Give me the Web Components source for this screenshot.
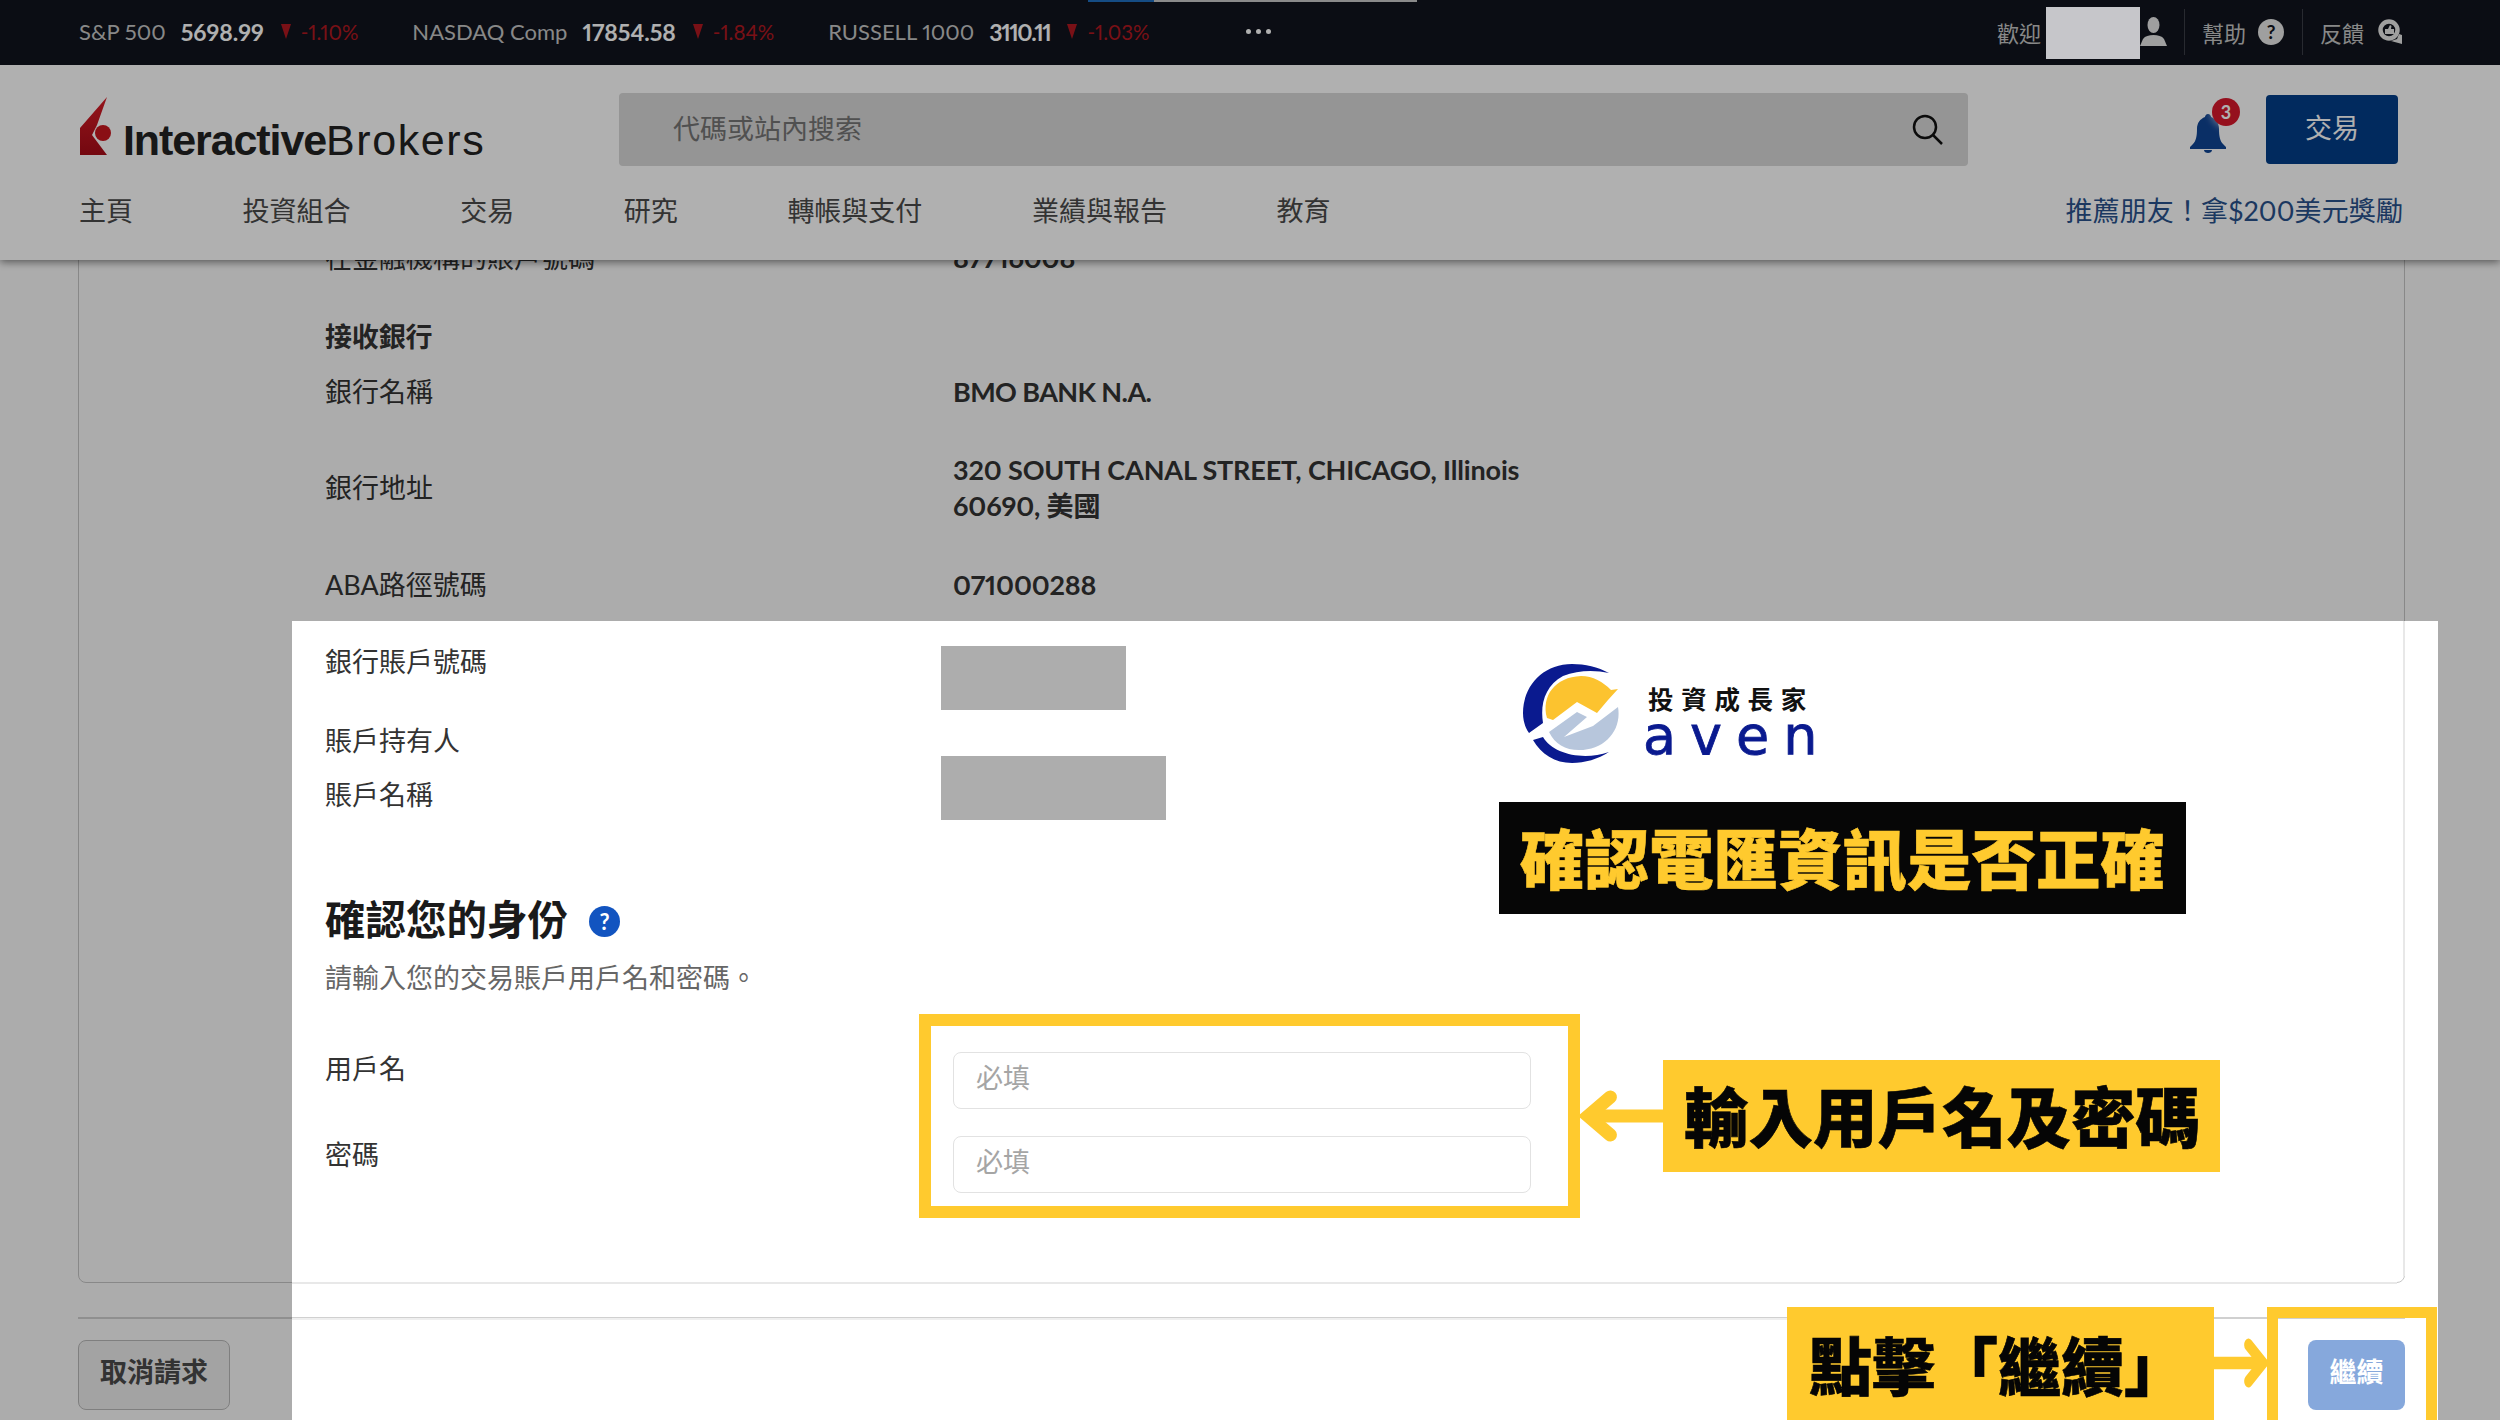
<!DOCTYPE html>
<html lang="zh-Hant">
<head>
<meta charset="utf-8">
<title>Interactive Brokers</title>
<style>
    html, body { margin: 0; height: 1420px; overflow: hidden; }
    body {
        font-family: "Lato", "Noto Sans CJK TC", sans-serif;
        font-size: 27px;
        font-variant-numeric: proportional-nums;
        color: #333;
        background: #fff;
    }
    .bold { font-weight: 700; letter-spacing: -0.150px; }
</style>
</head>
<body>
<ib-page>
    <ib-ticker slot="top">
        <ib-quote name="S&amp;P 500" value="5698.99" change="-1.10%"></ib-quote>
        <ib-quote name="NASDAQ Comp" value="17854.58" change="-1.84%"></ib-quote>
        <ib-quote name="RUSSELL 1000" value="3110.11" change="-1.03%" style="--value-spacing:-1.400px"></ib-quote>
    </ib-ticker>
    <ib-header slot="top"></ib-header>

    <ib-card>
        <ib-row style="margin-top:0"><span slot="label">在金融機構的賬戶號碼</span><span class="bold">87716008</span></ib-row>
        <ib-row style="margin-top:39px"><span slot="label" class="bold">接收銀行</span></ib-row>
        <ib-row style="margin-top:15px"><span slot="label">銀行名稱</span><span class="bold" style="letter-spacing:-0.600px">BMO BANK N.A.</span></ib-row>
        <ib-row style="margin-top:38px;height:76px"><span slot="label">銀行地址</span><span class="bold">320 SOUTH CANAL STREET, CHICAGO, Illinois<br>60690, 美國</span></ib-row>
        <ib-row style="margin-top:39px"><span slot="label">ABA路徑號碼</span><span class="bold">071000288</span></ib-row>
        <ib-row style="margin-top:37px"><span slot="label">銀行賬戶號碼</span></ib-row>
        <ib-row style="margin-top:39px"><span slot="label">賬戶持有人</span></ib-row>
        <ib-row style="margin-top:14px"><span slot="label">賬戶名稱</span></ib-row>
        <ib-identity style="margin-top:76px"></ib-identity>
        <ib-field label="用戶名" style="margin-top:53px;--label-height:34px"></ib-field>
        <ib-field label="密碼" style="margin-top:27px;--label-height:38px"></ib-field>
    </ib-card>

    <ib-footer></ib-footer>

    <ib-spotlight slot="over"></ib-spotlight>
    <ib-annotations slot="over"></ib-annotations>
</ib-page>

<script>
// small helper, every element here is just a template plus an open shadow root
function component(name, html, setup) {
    const template = document.createElement('template');
    template.innerHTML = html;
    customElements.define(name, class extends HTMLElement {
        constructor() {
            super();
            this.attachShadow({ mode: 'open' });
            this.shadowRoot.appendChild(template.content.cloneNode(true));
        }
        connectedCallback() {
            if (setup) setup(this, this.shadowRoot);
        }
    });
}

component('ib-page', /*html*/`
<style>
    :host { display: block; position: relative; width: 2500px; height: 1420px; overflow: hidden; }
    .top { position: relative; z-index: 2; }
    /* page is a touch greyer than the header, but the lit window is pure white */
    main {
        display: block; height: 1160px; overflow: hidden; padding: 0 95px 0 78px; box-sizing: border-box;
        background: linear-gradient(#fff, #fff) 292px 361px / 2146px 799px no-repeat, #fafafa;
    }
</style>
<div class="top"><slot name="top"></slot></div>
<main><slot></slot></main>
<slot name="over"></slot>
`);

component('ib-ticker', /*html*/`
<style>
    :host {
        display: flex;
        align-items: center;
        height: 65px;
        box-sizing: border-box;
        padding: 0 97px 2px 79px;
        background: #10141d;
        color: #c6c6c6;
        font-size: 22px;
        gap: 54px;
        position: relative;
    }
    .progress { position: absolute; top: 0; left: 1088px; width: 329px; height: 2px; background: linear-gradient(90deg, #1f6fc0 20%, #c8c8c8 20%); }
    .dots { display: flex; gap: 5px; margin-left: 42px; }
    .dots i { width: 5px; height: 5px; border-radius: 50%; background: #fff; }
    .right { margin-left: auto; display: flex; align-items: center; height: 100%; }
    .welcome { width: 143px; }
    .sep { width: 1px; height: 46px; background: #3a3e46; }
    .help { margin-left: 17px; display: flex; align-items: center; gap: 12px; width: 100px; }
    .feedback { margin-left: 17px; display: flex; align-items: center; gap: 14px; }
    .q { width: 26px; height: 26px; border-radius: 50%; background: #e6e6e6; color: #10141d; font: 700 19px/26px "Lato", sans-serif; text-align: center; }
    svg { display: block; }
</style>
<div class="progress"></div>
<slot></slot>
<span class="dots"><i></i><i></i><i></i></span>
<div class="right">
    <span class="welcome">歡迎</span>
    <svg width="27" height="29" viewBox="0 0 27 29" style="margin-right:17px"><ellipse cx="13.500" cy="8" rx="6" ry="8" fill="#e6e6e6"/><path d="M0 29l3-7c2-3 6-4 10.500-4S22 19 24 22l3 7z" fill="#e6e6e6"/></svg>
    <span class="sep"></span>
    <div class="help"><span>幫助</span><span class="q">?</span></div>
    <span class="sep"></span>
    <div class="feedback"><span>反饋</span>
        <svg width="25" height="25" viewBox="0 0 25 25">
            <circle cx="11" cy="11" r="8.500" fill="none" stroke="#e6e6e6" stroke-width="4.500"/>
            <path d="M7 10h3l2-4 1.500 1-.5 3h3v5H7z" fill="#e6e6e6"/>
            <path d="M13 22l6-2 2-5 3 1v9z" fill="#e6e6e6"/>
        </svg>
    </div>
</div>
`);

component('ib-quote', /*html*/`
<style>
    :host { display: flex; align-items: center; white-space: nowrap; }
    .value { color: #fff; font-size: 23px; font-weight: 700; margin: 0 17px 0 15px; letter-spacing: var(--value-spacing, 0); }
    .tri { width: 0; height: 0; border: solid transparent; border-width: 15px 5.500px 0; border-top-color: #b01820; margin-right: 10px; }
    .change { color: #b01820; font-size: 20.500px; }
</style>
<span class="name"></span><span class="value"></span><span class="tri"></span><span class="change"></span>
`, (el, root) => {
    root.querySelector('.name').textContent = el.getAttribute('name');
    root.querySelector('.value').textContent = el.getAttribute('value');
    root.querySelector('.change').textContent = el.getAttribute('change');
});

component('ib-header', /*html*/`
<style>
    :host {
        display: block;
        height: 195px;
        box-sizing: border-box;
        padding: 28px 97px 0 79px;
        background: #ffffff;
        box-shadow: 0 2px 8px rgba(0,0,0,0.5);
    }
    .row1 { display: flex; align-items: center; height: 73px; }
    .logo { width: 540px; display: flex; align-items: flex-end; gap: 10px; height: 58px; margin-top: -8px; }
    .word { font: 400 43px/1 "Liberation Sans", sans-serif; color: #222; margin-bottom: -7px; letter-spacing: 1.600px; }
    .word b { font-weight: 700; letter-spacing: -1.100px; }
    .search {
        width: 1349px; height: 73px; box-sizing: border-box; padding: 0 24px 0 54px;
        display: flex; align-items: center; justify-content: space-between;
        background: #d8d8d8; border-radius: 4px; color: #747474;
    }
    .search span { margin-bottom: 5px; }
    .bell { position: relative; margin-left: 222px; width: 36px; height: 39px; top: 4px; }
    .badge {
        position: absolute; left: 22px; top: -16px; width: 28px; height: 28px; border-radius: 50%;
        background: #d8182c; color: #fff; font-size: 18px; font-weight: 700; line-height: 28px; text-align: center;
        box-shadow: 0 0 7px 2px rgba(255,255,255,0.45);
    }
    .trade {
        margin-left: 40px; width: 132px; height: 69px; border-radius: 4px;
        background: #023d88; color: #fff; text-align: center; line-height: 66px;
    }
    nav { display: flex; align-items: center; height: 44px; margin-top: 21px; gap: 109.600px; color: #4a4a4a; }
    nav a:last-child { margin-left: auto; color: #29518c; letter-spacing: 0.100px; }
    svg { display: block; }
</style>
<div class="row1">
    <div class="logo">
        <svg width="34" height="58" viewBox="0 0 34 58">
            <defs><linearGradient id="red" x1="0" y1="0" x2="0" y2="1"><stop offset="0" stop-color="#d81e28"/><stop offset="1" stop-color="#a80c18"/></linearGradient></defs>
            <path d="M28 0L1 31V58H28L13 38L18 28z" fill="url(#red)"/><circle cx="24" cy="36" r="8" fill="#c8161e"/>
        </svg>
        <span class="word"><b>Interactive</b>Brokers</span>
    </div>
    <div class="search"><span>代碼或站內搜索</span>
        <svg width="33" height="31" viewBox="0 0 33 31" fill="none" stroke="#111" stroke-width="2.500"><circle cx="14" cy="13" r="11"/><path d="M22 21l9 9"/></svg>
    </div>
    <div class="bell">
        <svg width="36" height="39" viewBox="0 0 36 39"><path d="M18 0c2 0 3 2 3 3 5 2 8 6 8 12 0 7 1 12 4 15l3 3v2H0v-2l3-3c3-3 4-8 4-15C7 9 10 5 15 3c0-1 1-3 3-3z" fill="#0f4494"/><path d="M14 36h8c0 2-2 3-4 3s-4-1-4-3z" fill="#0f4494"/></svg>
        <span class="badge">3</span>
    </div>
    <div class="trade">交易</div>
</div>
<nav>
    <a>主頁</a><a>投資組合</a><a>交易</a><a>研究</a><a>轉帳與支付</a><a>業績與報告</a><a>教育</a>
    <a>推薦朋友！拿$200美元獎勵</a>
</nav>
`);

component('ib-card', /*html*/`
<style>
    :host {
        display: block;
        height: 1063px;
        margin-top: -40px;
        padding: 18px 0 0 246px;
        box-sizing: border-box;
        border: 1.500px solid #c6c6c6;
        border-radius: 8px;
    }
</style>
<slot></slot>
`);

component('ib-row', /*html*/`
<style>
    :host { display: grid; grid-template-columns: 628px 1fr; align-items: center; height: 40px; padding-bottom: 3px; box-sizing: border-box; line-height: 36px; }
</style>
<div><slot name="label"></slot></div>
<div><slot></slot></div>
`);

component('ib-identity', /*html*/`
<style>
    :host { display: block; }
    h2 { display: flex; align-items: center; gap: 21px; margin: 0; height: 56px; padding-bottom: 5px; box-sizing: border-box; font-size: 40.500px; font-weight: 700; color: #1a1a1a; }
    .q { width: 31px; height: 31px; border-radius: 50%; background: #1254c0; color: #fff; font-size: 22px; line-height: 31px; text-align: center; margin-top: 7px; }
    p { margin: 11px 0 0; height: 40px; line-height: 38px; color: #666; }
</style>
<h2>確認您的身份<span class="q">?</span></h2>
<p>請輸入您的交易賬戶用戶名和密碼。</p>
`);

component('ib-field', /*html*/`
<style>
    :host { display: grid; grid-template-columns: 628px 578px; height: 57px; }
    .label { line-height: var(--label-height, 36px); }
    .input {
        box-sizing: border-box; height: 57px; padding-left: 22px;
        border: 1.500px solid #e2e2e2; border-radius: 8px;
        color: #a5a5a5; line-height: 50px;
    }
</style>
<div class="label"></div>
<div class="input">必填</div>
`, (el, root) => {
    root.querySelector('.label').textContent = el.getAttribute('label');
});

component('ib-footer', /*html*/`
<style>
    :host {
        display: flex; justify-content: space-between; align-items: center;
        margin-top: 34px; height: 92px; padding-top: 21px; box-sizing: border-box;
        border-top: 2px solid #d0d0d0;
    }
    button {
        font: inherit; font-weight: 700; height: 70px; border-radius: 8px; padding: 0 0 8px;
    }
    .cancel { width: 152px; background: #ececec; border: 1.500px solid #b9b9b9; color: #4a4a4a; }
    .next { width: 97px; background: #86a8dc; border: 0; color: #fff; }
</style>
<button class="cancel">取消請求</button>
<button class="next">繼續</button>
`);

// the dim layer: a see-through window whose huge shadow greys out the rest of the page
component('ib-spotlight', /*html*/`
<style>
    :host {
        position: absolute; left: 292px; top: 621px; width: 2146px; height: 800px;
        box-shadow: 0 0 0 3000px rgba(0,0,0,0.31);
        pointer-events: none;
        z-index: 3;
    }
</style>
`);

component('ib-callout', /*html*/`
<style>
    :host {
        position: absolute; display: flex; align-items: center; box-sizing: border-box;
        background: #ffca2e; color: #050505;
        font: 900 64.500px/1 "Noto Sans CJK TC", sans-serif;
        -webkit-text-stroke: 0.600px currentColor;
        white-space: nowrap;
        padding-bottom: 3px;
    }
    :host([dark]) { background: #060606; color: #ffca2e; }
</style>
<slot></slot>
`);

component('ib-frame', /*html*/`
<style>
    :host { position: absolute; box-sizing: border-box; border: 12px solid #ffca2e; }
</style>
`);

component('ib-arrow', /*html*/`
<style>
    :host { position: absolute; display: block; }
    svg { display: block; width: 100%; height: 100%; overflow: visible; }
    :host([left]) svg { transform: scaleX(-1); }
</style>
<svg viewBox="0 0 80 50" preserveAspectRatio="none" fill="none" stroke="#ffca2e" stroke-width="13" stroke-linecap="round" stroke-linejoin="miter">
    <path d="M0 25H72" stroke-linecap="butt"/><path d="M52 6L74 25L52 44"/>
</svg>
`);

component('ib-annotations', /*html*/`
<style>
    :host { position: absolute; inset: 0; z-index: 4; display: block; pointer-events: none; }
    .redact { position: absolute; background: #adadad; }
    /* the lit part of the card and footer rules is paler than the dimmed part */
    .rule { position: absolute; background: #e8e8e8; }
    .stamp { position: absolute; left: 1523px; top: 664px; display: flex; gap: 27px; }
    .stamp svg { display: block; }
    .zh { font: 700 25.500px/25px "Noto Sans CJK TC", sans-serif; letter-spacing: 7.700px; color: #111; margin: 21px 0 0 1px; }
    .en { font: 400 54px/30px "DejaVu Sans", sans-serif; letter-spacing: 14px; color: #0a1a8f; margin: 11px 0 0 -4px; -webkit-text-stroke: 0.800px #0a1a8f; }
</style>
<div class="redact" style="left:2046px;top:7px;width:94px;height:52px;background:#c6c6ca"></div>
<div class="redact" style="left:941px;top:646px;width:185px;height:64px"></div>
<div class="redact" style="left:941px;top:756px;width:225px;height:64px"></div>

<div class="rule" style="left:292px;top:1282px;width:2105px;height:2px"></div>
<div class="rule" style="left:2403px;top:621px;width:2px;height:655px"></div>
<div class="rule" style="left:292px;top:1318px;width:1495px;height:2px;background:#efefef"></div>

<div class="stamp">
    <svg width="97" height="99" viewBox="0 0 97 99">
        <path d="M86 9C75 3 62 0 49 0 20 0 0 22 0 49c0 8 2 14 6 20l14-10C17 40 22 22 40 12 55 6 72 6 86 9z" fill="#0a1a8f"/>
        <path d="M10 76l10-3c10 17 40 24 66 15-11 7-24 11-37 11-17 0-31-9-39-23z" fill="#0a1a8f"/>
        <path d="M24 54C18 32 32 13 58 12c12 0 22 6 30 14l7-1-10 11-11 13-20-11-24 18z" fill="#fcc32f"/>
        <path d="M26 68l28-20 10 5-23 20 29-11 25-19c4 23-13 43-39 43-14 0-24-6-30-18z" fill="#b7c6dc"/>
    </svg>
    <div>
        <div class="zh">投資成長家</div>
        <div class="en">aven</div>
    </div>
</div>

<ib-callout dark style="left:1499px;top:802px;width:687px;height:112px;padding-left:21px">確認電匯資訊是否正確</ib-callout>

<ib-frame style="left:919px;top:1014px;width:661px;height:204px"></ib-frame>
<ib-arrow left style="left:1582px;top:1091px;width:81px;height:50px"></ib-arrow>
<ib-callout style="left:1663px;top:1060px;width:557px;height:112px;padding-left:21px">輸入用戶名及密碼</ib-callout>

<ib-callout style="left:1787px;top:1307px;width:427px;height:113px;padding-left:22px;font-size:63px">點擊「繼續」</ib-callout>
<ib-arrow style="left:2214px;top:1339px;width:53px;height:48px"></ib-arrow>
<ib-frame style="left:2267px;top:1307px;width:170px;height:125px;border-width:11px 11px 12px"></ib-frame>
`);
</script>
</body>
</html>
